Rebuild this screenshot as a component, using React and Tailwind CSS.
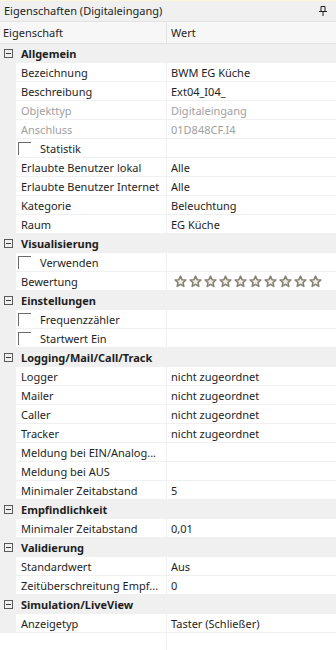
import React from 'react';

const F = { fontFamily: '"Noto Sans", "Open Sans", sans-serif' };

const sections = [
  {
    title: 'Allgemein',
    rows: [
      { name: 'Bezeichnung', value: 'BWM EG Küche' },
      { name: 'Beschreibung', value: 'Ext04_I04_' },
      { name: 'Objekttyp', value: 'Digitaleingang', disabled: true },
      { name: 'Anschluss', value: '01D848CF.I4', disabled: true },
      { name: 'Statistik', check: true },
      { name: 'Erlaubte Benutzer lokal', value: 'Alle' },
      { name: 'Erlaubte Benutzer Internet', value: 'Alle' },
      { name: 'Kategorie', value: 'Beleuchtung' },
      { name: 'Raum', value: 'EG Küche' },
    ],
  },
  {
    title: 'Visualisierung',
    rows: [
      { name: 'Verwenden', check: true },
      { name: 'Bewertung', stars: true },
    ],
  },
  {
    title: 'Einstellungen',
    rows: [
      { name: 'Frequenzzähler', check: true },
      { name: 'Startwert Ein', check: true },
    ],
  },
  {
    title: 'Logging/Mail/Call/Track',
    rows: [
      { name: 'Logger', value: 'nicht zugeordnet' },
      { name: 'Mailer', value: 'nicht zugeordnet' },
      { name: 'Caller', value: 'nicht zugeordnet' },
      { name: 'Tracker', value: 'nicht zugeordnet' },
      { name: 'Meldung bei EIN/Analog...', value: '' },
      { name: 'Meldung bei AUS', value: '' },
      { name: 'Minimaler Zeitabstand', value: '5' },
    ],
  },
  {
    title: 'Empfindlichkeit',
    rows: [{ name: 'Minimaler Zeitabstand', value: '0,01' }],
  },
  {
    title: 'Validierung',
    rows: [
      { name: 'Standardwert', value: 'Aus' },
      { name: 'Zeitüberschreitung Empf...', value: '0' },
    ],
  },
  {
    title: 'Simulation/LiveView',
    rows: [{ name: 'Anzeigetyp', value: 'Taster (Schließer)' }],
  },
];

function Star() {
  return (
    <svg width="13" height="13" viewBox="0 0 24 24" className="shrink-0">
      <polygon
        points="12,2 14.9,8.6 22,9.3 16.6,14 18.2,21 12,17.3 5.8,21 7.4,14 2,9.3 9.1,8.6"
        fill="#eeece4"
        stroke="#858174"
        strokeWidth="2.8"
        strokeLinejoin="round"
      />
    </svg>
  );
}

function Row({ row }) {
  const tone = row.disabled ? 'text-[#a0a0a0]' : 'text-[#1e1e1e]';
  return (
    <div className="flex h-[19px]">
      <div className="w-4 shrink-0 bg-[#f0f0f0]" />
      <div className="flex flex-1 border-b border-[#f0f0f0] bg-white">
        <div className="flex w-[151px] shrink-0 items-center overflow-hidden whitespace-nowrap border-r border-[#f0f0f0] pl-[5px]">
          {row.check ? (
            <>
              <span className="ml-[-3px] h-[13px] w-[13px] shrink-0 border-l border-t border-[#6b6b6b]" />
              <span className={`ml-[9px] ${tone}`}>{row.name}</span>
            </>
          ) : (
            <span className={tone}>{row.name}</span>
          )}
        </div>
        <div className="flex flex-1 items-center overflow-hidden whitespace-nowrap pl-[4px]">
          {row.stars ? (
            <div className="flex gap-[2px] pl-[3px]">
              {Array.from({ length: 10 }).map((_, i) => (
                <Star key={i} />
              ))}
            </div>
          ) : (
            <span className={tone}>{row.value}</span>
          )}
        </div>
      </div>
    </div>
  );
}

export default function App() {
  return (
    <div className="h-[650px] w-[336px] overflow-hidden bg-white text-[11px] leading-none" style={F}>
      {/* title */}
      <div className="flex h-[21px] items-center justify-between border-t border-[#fbf7d9] bg-[#f0f0f0] pb-[1px] pl-[4px] pr-[9px] text-[#1e1e1e]">
        <span>Eigenschaften (Digitaleingang)</span>
        <svg width="8" height="10" viewBox="0 0 8 10">
          <path d="M2 0.5h4v5H2z" fill="none" stroke="#1e1e1e" />
          <path d="M0 5.5h8M4 5.5V10" stroke="#1e1e1e" />
        </svg>
      </div>
      {/* header */}
      <div className="flex h-[23px] border-b border-t border-[#e3e3e3] bg-[#f7f7f7] text-[#1e1e1e]">
        <div className="flex w-[167px] items-center border-r border-[#e3e3e3] pl-[3px]">Eigenschaft</div>
        <div className="flex flex-1 items-center pl-[4px]">Wert</div>
      </div>
      {sections.map((s) => (
        <div key={s.title}>
          <div className="flex h-[19px] items-center bg-[#f0f0f0]">
            <span className="ml-[4px] flex h-[9px] w-[9px] items-center justify-center border border-[#5a5a5a]">
              <span className="h-px w-[5px] bg-[#3a3a3a]" />
            </span>
            <span className="ml-[8px] font-bold text-[#1e1e1e]">{s.title}</span>
          </div>
          {s.rows.map((r, i) => (
            <Row key={i} row={r} />
          ))}
        </div>
      ))}
      <div className="flex h-[40px]">
        <div className="w-[167px] border-r border-[#f0f0f0]" />
      </div>
    </div>
  );
}
